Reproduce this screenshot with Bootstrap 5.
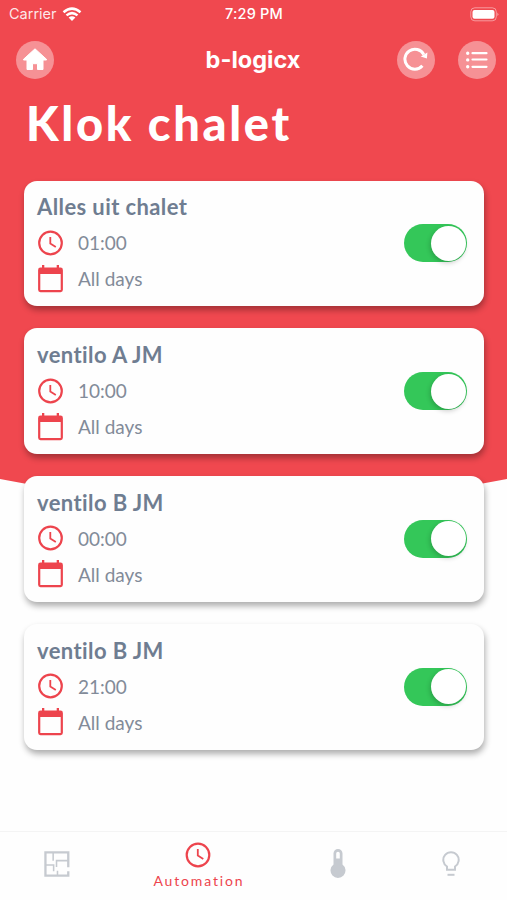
<!DOCTYPE html>
<html lang="en">
<head>
<meta charset="utf-8">
<meta name="viewport" content="width=device-width, initial-scale=1">
<title>b-logicx</title>
<link href="https://cdn.jsdelivr.net/npm/bootstrap@5.3.0/dist/css/bootstrap.min.css" rel="stylesheet">
<style>
  body { font-family: Lato, sans-serif; background: #fefefe; }
  svg { display: block; flex: none; }
  .screen { height: 900px; isolation: isolate; }
  .backdrop { z-index: -1; }
  .statusbar { height: 28px; font: 400 14.5px/28px Inter, sans-serif; padding: 0 8px 0 9px; color: rgba(255,255,255,.88); }
  .statusbar > * { flex: 1; }
  .clock-text { font-weight: 500; color: #fff; letter-spacing: .2px; }
  .topbar { height: 64px; padding: 0 11px 0 16px; }
  .topbar > * { flex: 1; }
  .brand { font: 700 23.5px/30px Inter, sans-serif; padding-right: 6px; }
  .round-btn { width: 38px; height: 38px; padding: 0; border: 0; border-radius: 50%; background: rgba(255,255,255,.4); color: #fff; }
  .actions { gap: 23px; }
  .page-title { font-size: 47px; font-weight: 900; line-height: 62px; letter-spacing: 2.65px; margin: 0 0 26.500px 26px; white-space: nowrap; }
  .schedules { gap: 22px; padding: 0 23px 0 24px; }
  .schedule { height: 125.8px; border: 0; border-radius: 13px; box-shadow: 1px 4px 6px rgba(0,0,0,.32); padding: 0 17px 0 13px; background: #fefefe; }
  .schedule h2 { font-size: 22px; font-weight: 700; line-height: 27px; letter-spacing: .4px; margin: -1px 0 9px; color: #6f7d91; }
  .detail { height: 27px; gap: 14px; font-size: 19px; line-height: 27px; color: #828b99; }
  .detail + .detail { margin-top: 9px; }
  .accent { color: #ed444d; }
  .switch { width: 63px; height: 38px; border-radius: 19px; background: #34c759; padding: 1.5px; }
  .knob { width: 35px; height: 35px; border-radius: 50%; background: #fff; box-shadow: -1px 2px 5px rgba(0,0,0,.2); }
  .tabs { display: grid; grid-template-columns: 114px 168px 112px 113px; height: 69px; border-top: 1px solid #f4f4f4; background: #fefefe; color: #c6cad0; padding-bottom: 5px; }
  .tab { color: inherit; text-decoration: none; }
  .tab.accent { color: #ed444d; padding-top: 4px; }
  .tab-label { font-size: 14px; line-height: 17px; letter-spacing: 1.85px; margin: 4px -1.85px 0 0; }
</style>
</head>
<body>
<svg width="0" height="0" class="position-absolute" aria-hidden="true">
  <symbol id="clock" viewBox="0 0 26 26"><circle cx="13" cy="13" r="11.3" fill="none" stroke="currentColor" stroke-width="2.2"/><path d="M12.8 7v6.6l5.500 3.400" fill="none" stroke="currentColor" stroke-width="1.8"/></symbol>
  <symbol id="calendar" viewBox="0 0 26 28"><path fill="currentColor" fill-rule="evenodd" d="M4.500 0h2.300v2.500h12.400V0h2.300v2.500H23a2.400 2.400 0 0 1 2.400 2.400v19.900a2.400 2.400 0 0 1-2.400 2.400H3a2.400 2.400 0 0 1-2.400-2.400V4.900A2.400 2.400 0 0 1 3 2.500h1.500zM2.800 9v16h20.400V9z"/></symbol>
</svg>
<div class="screen position-relative d-flex flex-column overflow-hidden">
  <svg class="backdrop position-absolute top-0 start-0" width="507" height="510" aria-hidden="true"><path fill="#f0484f" d="M0 0h507v479Q253.500 529 0 479z"/></svg>

  <div class="statusbar d-flex align-items-center">
    <div class="d-flex align-items-center"><span>Carrier</span>
      <svg style="margin-left:5px" width="20" height="15" viewBox="0 0 20 15" fill="none" stroke="#fff" stroke-width="2.500"><path d="M1.500 5.200Q10-2 18.500 5.200M4.500 8.400Q10 3.800 15.500 8.400"/><path fill="#fff" stroke="none" d="M6.600 10.500Q10 7.800 13.400 10.500L10 14z"/></svg>
    </div>
    <div class="clock-text text-center">7:29 PM</div>
    <div class="d-flex justify-content-end">
      <svg width="29" height="15" viewBox="0 0 29 15"><rect x=".8" y=".8" width="25.500" height="13" rx="4" fill="none" stroke="#fff" stroke-opacity=".45"/><rect x="2.500" y="3" width="22" height="8.800" rx="2" fill="#fff"/><path d="M27.400 5.500q2 1.800 0 3.600z" fill="#fff" fill-opacity=".5"/></svg>
    </div>
  </div>

  <header class="topbar d-flex align-items-center text-white">
    <div><button class="round-btn d-flex align-items-center justify-content-center" aria-label="Home">
      <svg width="26" height="24" viewBox="0 0 26 24"><path fill="#fff" stroke="#fff" stroke-linejoin="round" d="M13 .8 1.500 11.300V12H5v9.500h5.500v-5.800h5v5.800H21V12h3.500v-.7z"/></svg>
    </button></div>
    <div class="brand text-center">b-logicx</div>
    <div class="actions d-flex justify-content-end">
      <button class="round-btn d-flex align-items-center justify-content-center" aria-label="Refresh">
        <svg width="26" height="26" viewBox="0 0 26 26"><path d="M19.400 18.800A10 10 0 1 1 20.800 7.600" fill="none" stroke="#fff" stroke-width="3"/><path d="m24.400 5.500-.5 5.900-6.200-2z" fill="#fff"/></svg>
      </button>
      <button class="round-btn d-flex align-items-center justify-content-center" aria-label="Menu">
        <svg width="24" height="20" viewBox="0 0 24 20" stroke="#fff" stroke-linecap="round"><path stroke-width="2.200" d="M7.500 3.200h14M7.500 9.500h14M7.500 16.800h14"/><path stroke-width="3.400" d="M2.700 3.200h.01M2.700 9.900h.01M2.700 16.700h.01"/></svg>
      </button>
    </div>
  </header>

  <h1 class="page-title text-white">Klok chalet</h1>

  <main class="schedules d-flex flex-column flex-grow-1">
    <section class="schedule card flex-row align-items-center justify-content-between">
      <div><h2>Alles uit chalet</h2>
        <div class="detail d-flex align-items-center"><svg class="accent" width="27" height="26"><use href="#clock"/></svg><span>01:00</span></div>
        <div class="detail d-flex align-items-center"><svg class="accent" width="27" height="28"><use href="#calendar"/></svg><span>All days</span></div>
      </div>
      <div class="switch d-flex justify-content-end" role="switch" aria-checked="true"><div class="knob"></div></div>
    </section>
    <section class="schedule card flex-row align-items-center justify-content-between">
      <div><h2>ventilo A JM</h2>
        <div class="detail d-flex align-items-center"><svg class="accent" width="27" height="26"><use href="#clock"/></svg><span>10:00</span></div>
        <div class="detail d-flex align-items-center"><svg class="accent" width="27" height="28"><use href="#calendar"/></svg><span>All days</span></div>
      </div>
      <div class="switch d-flex justify-content-end" role="switch" aria-checked="true"><div class="knob"></div></div>
    </section>
    <section class="schedule card flex-row align-items-center justify-content-between">
      <div><h2>ventilo B JM</h2>
        <div class="detail d-flex align-items-center"><svg class="accent" width="27" height="26"><use href="#clock"/></svg><span>00:00</span></div>
        <div class="detail d-flex align-items-center"><svg class="accent" width="27" height="28"><use href="#calendar"/></svg><span>All days</span></div>
      </div>
      <div class="switch d-flex justify-content-end" role="switch" aria-checked="true"><div class="knob"></div></div>
    </section>
    <section class="schedule card flex-row align-items-center justify-content-between">
      <div><h2>ventilo B JM</h2>
        <div class="detail d-flex align-items-center"><svg class="accent" width="27" height="26"><use href="#clock"/></svg><span>21:00</span></div>
        <div class="detail d-flex align-items-center"><svg class="accent" width="27" height="28"><use href="#calendar"/></svg><span>All days</span></div>
      </div>
      <div class="switch d-flex justify-content-end" role="switch" aria-checked="true"><div class="knob"></div></div>
    </section>
  </main>

  <nav class="tabs align-items-center justify-items-center">
    <a class="tab d-flex justify-content-center" href="#" aria-label="Floor plan">
      <svg width="26" height="26" viewBox="0 0 27 27" fill="none" stroke="currentColor"><path stroke-width="2.400" d="M25.200 17V1.500H1.500v24h23.700V21"/><path stroke-width="1.600" d="M9.500 2v8M2 14.500h8v6.500M13 16.500V10h12M14 25v-4.500"/></svg>
    </a>
    <a class="tab accent d-flex flex-column align-items-center" href="#">
      <svg width="26" height="26"><use href="#clock"/></svg>
      <span class="tab-label">Automation</span>
    </a>
    <a class="tab d-flex justify-content-center" href="#" aria-label="Temperature">
      <svg width="16" height="30" viewBox="0 0 16 30"><path fill="currentColor" fill-rule="evenodd" d="M3.500 4.500a4.500 4.500 0 0 1 9 0v11a7.500 7.500 0 1 1-9 0zM6.200 4.600v5h3.600v-5a1.800 1.800 0 0 0-3.600 0z"/></svg>
    </a>
    <a class="tab d-flex justify-content-center" href="#" aria-label="Lights">
      <svg width="18" height="26" viewBox="0 0 18 26" fill="none" stroke="currentColor" stroke-width="2"><path d="M5 18.800v-3.300a7.700 7.700 0 1 1 8 0v3.300z"/><path d="M5.500 23.800h7"/></svg>
    </a>
  </nav>
</div>
<script src="https://cdn.jsdelivr.net/npm/bootstrap@5.3.0/dist/js/bootstrap.bundle.min.js"></script>
</body>
</html>
